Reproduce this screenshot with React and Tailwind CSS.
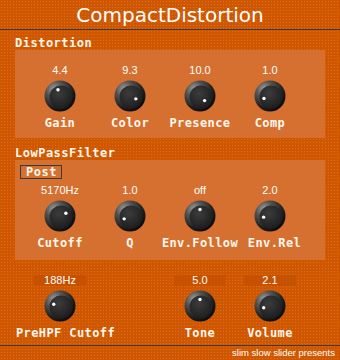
import { useId } from "react";

const mono = { fontFamily: '"DejaVu Sans Mono", "Liberation Mono", monospace' };
const arial = { fontFamily: '"Liberation Sans", Arial, sans-serif' };

// angle in degrees, 0 = pointing up, clockwise positive
const Knob = ({ angle }) => {
  const id = useId().replace(/:/g, "");
  const rad = (angle * Math.PI) / 180;
  const dx = 16 + Math.sin(rad) * 6.5;
  const dy = 16 - Math.cos(rad) * 6.5;
  return (
    <svg width="32" height="32" viewBox="0 0 32 32" className="block">
      <defs>
        <radialGradient id={`o${id}`} cx="32%" cy="28%" r="75%">
          <stop offset="0" stopColor="#a0a0a0" />
          <stop offset="0.35" stopColor="#555" />
          <stop offset="0.75" stopColor="#222" />
          <stop offset="1" stopColor="#0c0c0c" />
        </radialGradient>
        <radialGradient id={`i${id}`} cx="40%" cy="35%" r="70%">
          <stop offset="0" stopColor="#3c3c3c" />
          <stop offset="1" stopColor="#1c1c1c" />
        </radialGradient>
      </defs>
      <circle cx="16" cy="16" r="15.5" fill={`url(#o${id})`} />
      <circle cx="17" cy="17" r="11.5" fill={`url(#i${id})`} />
      <circle cx={dx} cy={dy} r="1.7" fill="#fff" />
    </svg>
  );
};

const Label = ({ children, className = "" }) => (
  <div
    className={`text-[12px] leading-[14px] font-bold tracking-[0.4px] text-[#fff8ee] whitespace-nowrap ${className}`}
    style={mono}
  >
    {children}
  </div>
);

const KnobCol = ({ value, label, angle, boxed, labelClass = "" }) => (
  <div className="w-[70px] flex flex-col items-center">
    {boxed ? (
      <div
        className="w-[52px] h-[11px] bg-[#c65100] text-white text-[11px] leading-[11px] text-center"
        style={arial}
      >
        {value}
      </div>
    ) : (
      <div className="h-[12px] text-white text-[11px] leading-[12px] text-center" style={arial}>
        {value}
      </div>
    )}
    <div className="mt-[4px]">
      <Knob angle={angle} />
    </div>
    <Label className={`mt-[4px] ${labelClass}`}>{label}</Label>
  </div>
);

const SectionTitle = ({ children, className = "" }) => (
  <div
    className={`ml-[15px] text-[12px] leading-[13px] font-bold tracking-[0.5px] text-[#fff8ee] ${className}`}
    style={mono}
  >
    {children}
  </div>
);

export default function App() {
  return (
    <div
      className="w-[340px] h-[360px] overflow-hidden flex flex-col bg-[#cf5700] [background-image:radial-gradient(#dc6d26_0.9px,transparent_0.9px)] [background-size:3px_3px]"
    >
      <div
        className="h-[29px] flex items-center justify-center text-white text-[20px] leading-[29px] pt-[1px]"
        style={{ fontFamily: '"DejaVu Sans", Verdana, sans-serif' }}
      >
        CompactDistortion
      </div>
      <div className="h-[1px] bg-[#3a3a3a]" />

      <SectionTitle className="mt-[7px]">Distortion</SectionTitle>
      <div className="mx-[15px] h-[88px] bg-[#d57030] pl-[10px] pt-[14px] flex">
        <KnobCol value="4.4" label="Gain" angle={-18} />
        <KnobCol value="9.3" label="Color" angle={116} />
        <KnobCol value="10.0" label="Presence" angle={135} />
        <KnobCol value="1.0" label="Comp" angle={-112} />
      </div>

      <SectionTitle className="mt-[9px]">LowPassFilter</SectionTitle>
      <div className="mx-[15px] h-[100px] bg-[#d57030] pt-[5px] flex flex-col">
        <div
          className="ml-[5px] w-[42px] h-[14px] border border-[#3a3a3a] pl-[5px] text-[12px] leading-[12px] font-bold tracking-[0.5px] text-[#fff8ee]"
          style={mono}
        >
          Post
        </div>
        <div className="pl-[10px] pt-[5px] flex">
          <KnobCol value="5170Hz" label="Cutoff" angle={65} />
          <KnobCol value="1.0" label="Q" angle={-116} />
          <KnobCol value="off" label="Env.Follow" angle={0} />
          <KnobCol value="2.0" label="Env.Rel" angle={-100} labelClass="pl-[9px]" />
        </div>
      </div>

      <div className="pl-[25px] mt-[15px] h-[65px] flex">
        <KnobCol value="188Hz" label="PreHPF Cutoff" angle={-75} boxed labelClass="pl-[11px]" />
        <div className="w-[70px]" />
        <KnobCol value="5.0" label="Tone" angle={0} boxed />
        <KnobCol value="2.1" label="Volume" angle={-105} boxed />
      </div>

      <div className="mt-[5px] h-[1px] bg-[#3a3a3a]" />
      <div
        className="flex-1 flex items-center justify-end pr-[5px] text-white text-[9.5px] leading-[14px]"
        style={arial}
      >
        slim slow slider presents
      </div>
    </div>
  );
}
